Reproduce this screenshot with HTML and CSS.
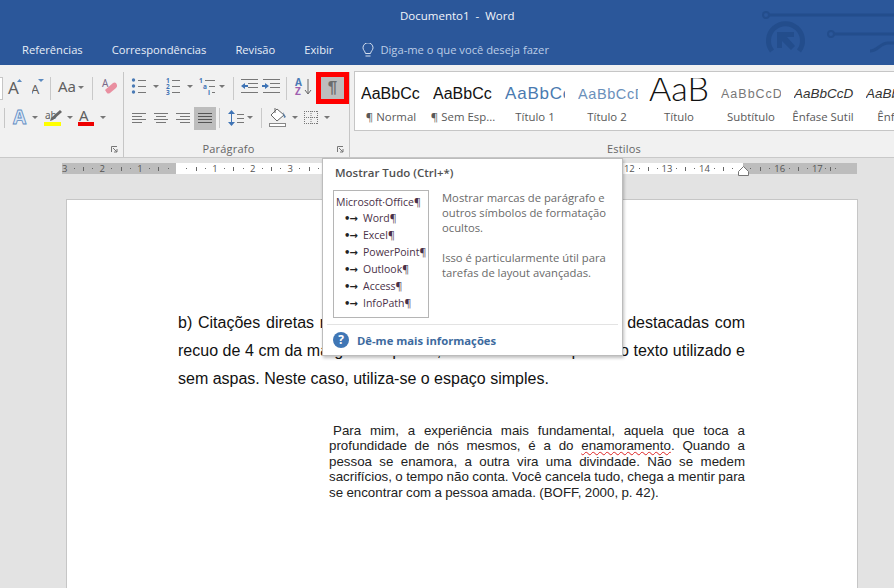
FILE: index.html
```html
<html>
<head>
	<title>Documento1 - Word</title>
	<meta charset="UTF-8">
	<link rel="stylesheet" href="styles.css">
</head>
<body>
	<header class="top">
		<!-- circuito decorativo da barra de titulo -->
		<svg class="circuit" width="134" height="65" viewBox="760 0 134 65" fill="none" stroke="#234d8c">
			<circle cx="766" cy="15" r="3" stroke-width="2"/>
			<path d="M769 15H894" stroke-width="3"/>
			<circle cx="831" cy="34" r="3" stroke-width="2"/>
			<path d="M834 34H894" stroke-width="3"/>
			<path d="M870 51c8 0 10-8 18-8h6" stroke-width="3"/>
			<path d="M772 51a17 17 0 1 1 27 0" stroke-width="5"/>
			<path d="M780 31h12v5h-7l8 9-4 4-9-9v7h-5V31z" fill="#234d8c" stroke="none" transform="translate(2 1)"/>
		</svg>
		<div class="title">Documento1&nbsp; - &nbsp;Word</div>
		<nav class="tabs">
			<span>Referências</span>
			<span>Correspondências</span>
			<span>Revisão</span>
			<span>Exibir</span>
			<span class="tell">
				<svg width="12" height="15" viewBox="0 0 12 15" fill="none" stroke="#d5e0f0">
					<path d="M3.5 10.5C3 8 1 7 1 4.8a5 5 0 0 1 10 0C11 7 9 8 8.500 10.500z"/>
					<path d="M3.500 13h5"/>
				</svg>
				Diga-me o que você deseja fazer
			</span>
		</nav>
	</header>

	<section class="ribbon">
		<div class="group group-font">
			<div class="row">
				<span class="sizebox"></span>
				<svg width="29" height="32" viewBox="3 72 29 32">
					<text x="8" y="94" class="gl" font-size="17">A</text>
					<path d="M17 82l2.500-3 2.500 3z" fill="#5b8ac0"/>
				</svg>
				<svg width="18" height="32" viewBox="32 72 18 32">
					<text x="31" y="94" class="gl" font-size="13">A</text>
					<path d="M38 79h6l-3 3z" fill="#5b8ac0"/>
				</svg>
				<i class="sep"></i>
				<svg width="41" height="32" viewBox="51 72 41 32">
					<text x="58" y="92" class="gl" font-size="15">Aa</text>
					<path d="M78 86h6l-3 3z" fill="#777"/>
				</svg>
				<i class="sep"></i>
				<svg width="30" height="32" viewBox="93 72 30 32">
					<text x="102" y="87" font-size="10" fill="#7a6a8a" font-family="Noto Sans">A</text>
					<path d="M105 90l8-7q1.500-1 3 0l1 2q.5 1.500-1 3l-6 5q-2 1-3 0z" fill="#e98fa0"/>
				</svg>
			</div>
			<div class="row">
				<svg width="8" height="28" viewBox="0 104 8 28"><path d="M4.500 108v20" stroke="#c6c6c6"/></svg>
				<svg width="31" height="28" viewBox="8 104 31 28">
					<text x="13" y="124" font-size="19" font-weight="bold" fill="#dbe7f6" stroke="#5f8cc2" stroke-width=".8" font-family="Noto Sans">A</text>
					<path d="M32 116h6l-3 3z" fill="#777"/>
				</svg>
				<svg width="34" height="28" viewBox="39 104 34 28">
					<text x="45" y="119" class="gl" font-size="10">ab</text>
					<path d="M62 112l-9 8-3 1 1-3 9-8z" fill="#666"/>
					<rect x="44" y="122" width="17" height="4" fill="#ff0"/>
					<path d="M67 116h6l-3 3z" fill="#777"/>
				</svg>
				<svg width="35" height="28" viewBox="74 104 35 28">
					<text x="80" y="121" class="gl" font-size="15">A</text>
					<rect x="79" y="122" width="16" height="4" fill="#e00"/>
					<path d="M101 116h6l-3 3z" fill="#777"/>
				</svg>
			</div>
			<div class="label-row">
				<svg class="launch" width="7" height="7" viewBox="0 0 7 7" fill="none" stroke="#777"><path d="M.5 6V.5H6M2 2l4 4M6 3v3H3"/></svg>
			</div>
		</div>

		<div class="group group-par">
			<div class="row">
				<svg width="37" height="32" viewBox="124 72 37 32">
					<g fill="#4a7ab5"><circle cx="133.500" cy="80" r="1.700"/><circle cx="133.500" cy="86" r="1.700"/><circle cx="133.500" cy="92" r="1.700"/></g>
					<path d="M138 80.500h8M138 86.500h8M138 92.500h8" stroke="#777"/>
					<path d="M153 85h6l-3 3z" fill="#777"/>
				</svg>
				<svg width="35" height="32" viewBox="161 72 35 32">
					<g class="num"><text x="166" y="83">1</text><text x="166" y="89">2</text><text x="166" y="95">3</text></g>
					<path d="M172 80.500h8M172 86.500h8M172 92.500h8" stroke="#777"/>
					<path d="M187 85h6l-3 3z" fill="#777"/>
				</svg>
				<svg width="37" height="32" viewBox="196 72 37 32">
					<g class="num"><text x="199" y="83">1</text><text x="203" y="89">a</text><text x="208" y="95">i</text></g>
					<path d="M205 80.500h10M209 86.500h6M212 92.500h3" stroke="#777"/>
					<path d="M219 85h6l-3 3z" fill="#777"/>
				</svg>
				<i class="sep"></i>
				<svg width="52" height="32" viewBox="234 72 52 32">
					<path d="M241 79.500h17M248 83.500h10M248 87.500h10M241 92.500h17M263 79.500h17M270 83.500h10M270 87.500h10M263 92.500h17" stroke="#777"/>
					<path d="M241 86l4-3v2h3v2h-3v2zM269 86l-4-3v2h-3v2h3v2z" fill="#3f74b5"/>
				</svg>
				<i class="sep"></i>
				<svg width="29" height="32" viewBox="287 72 29 32">
					<text x="295" y="86" font-size="10" font-weight="bold" fill="#4a7ab5" font-family="Noto Sans">A</text>
					<text x="295" y="95" font-size="10" font-weight="bold" fill="#a05fb0" font-family="Noto Sans">Z</text>
					<path d="M308 79v14M305 90l3 4 3-4" fill="none" stroke="#666"/>
				</svg>
				<span class="pilcrow">¶</span>
			</div>
			<div class="row">
				<svg width="70" height="28" viewBox="124 104 70 28">
					<path d="M132 113.500h14M132 116.500h10M132 119.500h14M132 122.500h10M154 113.500h14M156 116.500h10M154 119.500h14M156 122.500h10M176 113.500h14M180 116.500h10M176 119.500h14M180 122.500h10" stroke="#777"/>
				</svg>
				<span class="justify">
					<svg width="22" height="22" viewBox="0 0 22 22"><path d="M4 6.500h14M4 9.500h14M4 12.500h14M4 15.500h14" stroke="#555"/></svg>
				</span>
				<svg width="3" height="28" viewBox="0 0 3 28"></svg>
				<i class="sep low"></i>
				<svg width="41" height="28" viewBox="221 104 41 28">
					<path d="M232.500 112v12" stroke="#3f74b5"/>
					<path d="M229 114l3.500-4 3.500 4zM229 122l3.500 4 3.500-4z" fill="#3f74b5"/>
					<path d="M238 114.500h7M238 118.500h7M238 122.500h7" stroke="#777"/>
					<path d="M248 116h6l-3 3z" fill="#777"/>
				</svg>
				<i class="sep low"></i>
				<svg width="42" height="28" viewBox="263 104 42 28">
					<path d="M278 109l7 6-7 6-6-6z" fill="#fff" stroke="#666"/>
					<path d="M276 108v5" stroke="#666"/>
					<path d="M284 112l3 5-2 1z" fill="#5a7fa8"/>
					<rect x="270.500" y="123.500" width="16" height="3" fill="#fff" stroke="#888"/>
					<path d="M293 116h6l-3 3z" fill="#777"/>
				</svg>
				<svg width="44" height="28" viewBox="305 104 44 28">
					<path d="M305.500 111v13M312 111v13M318.500 111v13M305 111.500h14M305 117.500h14M305 123.500h14" stroke="#777" stroke-dasharray="1 1"/>
					<path d="M325 116h6l-3 3z" fill="#777"/>
				</svg>
			</div>
			<div class="label-row">
				<span class="label">Parágrafo</span>
				<svg class="launch" width="7" height="7" viewBox="0 0 7 7" fill="none" stroke="#777"><path d="M.5 6V.5H6M2 2l4 4M6 3v3H3"/></svg>
			</div>
		</div>

		<div class="group group-styles">
			<div class="gallery">
				<div class="style"><p class="pv">AaBbCc</p><span>¶ Normal</span></div>
				<div class="style"><p class="pv">AaBbCc</p><span>¶ Sem Esp...</span></div>
				<div class="style"><p class="pv t1">AaBbCc</p><span>Título 1</span></div>
				<div class="style"><p class="pv t2">AaBbCcD</p><span>Título 2</span></div>
				<div class="style"><p class="pv tt">AaB</p><span>Título</span></div>
				<div class="style"><p class="pv sub">AaBbCcD</p><span>Subtítulo</span></div>
				<div class="style"><p class="pv em">AaBbCcD</p><span>Ênfase Sutil</span></div>
				<div class="style"><p class="pv em">AaBbCcD</p><span>Ênfase</span></div>
			</div>
			<div class="label-row"><span class="label">Estilos</span></div>
		</div>
	</section>

	<main class="work">
		<div class="ruler">
			<span><b>3</b><i></i><u></u><i></i></span><span><b>2</b><i></i><u></u><i></i></span><span><b>1</b><i></i><u></u><i></i></span><span><b></b><i></i><u></u><i></i></span>
			<span><b>1</b><i></i><u></u><i></i></span><span><b>2</b><i></i><u></u><i></i></span><span><b>3</b><i></i><u></u><i></i></span><span><b>4</b><i></i><u></u><i></i></span>
			<span><b>5</b><i></i><u></u><i></i></span><span><b>6</b><i></i><u></u><i></i></span><span><b>7</b><i></i><u></u><i></i></span><span><b>8</b><i></i><u></u><i></i></span>
			<span><b>9</b><i></i><u></u><i></i></span><span><b>10</b><i></i><u></u><i></i></span><span><b>11</b><i></i><u></u><i></i></span><span><b>12</b><i></i><u></u><i></i></span>
			<span><b>13</b><i></i><u></u><i></i></span><span><b>14</b><i></i><u></u><i></i></span><span><b></b><i></i><u></u><i></i></span><span><b>16</b><i></i><u></u><i></i></span>
			<span><b>17</b><i></i><u></u><i></i></span>
			<svg class="indent" width="11" height="10" viewBox="0 0 11 10"><path d="M.5 9.500v-4l5-5 5 5v4z" fill="#fff" stroke="#777"/></svg>
		</div>
		<article class="page">
			<p class="body">b) Citações diretas no texto com mais de 3 linhas devem ser destacadas com recuo de 4 cm da margem esquerda, com letra menor que a do texto utilizado e sem aspas. Neste caso, utiliza-se o espaço simples.</p>
			<p class="quote">Para mim, a experiência mais fundamental, aquela que toca a profundidade de nós mesmos, é a do <span class="typo">enamoramento</span>. Quando a pessoa se enamora, a outra vira uma divindade. Não se medem sacrifícios, o tempo não conta. Você cancela tudo, chega a mentir para se encontrar com a pessoa amada. (BOFF, 2000, p. 42).</p>
		</article>
	</main>

	<aside class="tip">
		<h4>Mostrar Tudo (Ctrl+*)</h4>
		<div class="tip-main">
			<div class="sample">
				<div class="first">Microsoft·Office¶</div>
				<div class="li"><b>•→</b>Word¶</div>
				<div class="li"><b>•→</b>Excel¶</div>
				<div class="li"><b>•→</b>PowerPoint¶</div>
				<div class="li"><b>•→</b>Outlook¶</div>
				<div class="li"><b>•→</b>Access¶</div>
				<div class="li"><b>•→</b>InfoPath¶</div>
			</div>
			<div class="desc">
				<p>Mostrar marcas de parágrafo e outros símbolos de formatação ocultos.</p>
				<p>Isso é particularmente útil para tarefas de layout avançadas.</p>
			</div>
		</div>
		<div class="more">
			<span class="q">?</span>
			<span>Dê-me mais informações</span>
		</div>
	</aside>
</body>
</html>
```

FILE: styles.css
```css
* {
	margin: 0;
	padding: 0;
	box-sizing: border-box;
}
body {
	width: 894px;
	height: 588px;
	overflow: hidden;
	display: flex;
	flex-direction: column;
	position: relative;
	font-family: "Open Sans", "Noto Sans", sans-serif;
	background: #e3e3e3;
}

/* barra azul */
.top {
	height: 65px;
	background: #2b579a;
	color: #fff;
	position: relative;
	flex: none;
}
.circuit {
	position: absolute;
	top: 0;
	right: 0;
}
.title {
	position: relative;
	padding: 8px 0 0 400px;
	height: 36px;
	font-size: 11.5px;
	line-height: 16px;
	color: #f2f5fa;
}
.tabs {
	position: relative;
	display: flex;
	gap: 29px;
	padding-left: 22px;
	font-size: 11.2px;
	line-height: 28px;
	color: #e8eef7;
}
.tell {
	display: flex;
	align-items: center;
	gap: 6px;
	color: #bccde6;
}

/* faixa de opcoes */
.ribbon {
	height: 93px;
	flex: none;
	display: flex;
	background: #f1f1f1;
	border-bottom: 1px solid #c9c9c9;
	padding-top: 7px;
}
.group {
	display: flex;
	flex-direction: column;
}
.group-font {
	width: 124px;
	border-right: 1px solid #c6c6c6;
}
.group-par {
	width: 226px;
	border-right: 1px solid #c6c6c6;
}
.group-styles {
	flex: 1;
	min-width: 0;
	padding-left: 4px;
}
.row {
	display: flex;
	align-items: center;
	height: 32px;
}
.row + .row {
	height: 28px;
}
.row svg {
	flex: none;
}
.gl {
	fill: #5f5f5f;
	font-family: "Noto Sans", sans-serif;
}
.num {
	fill: #3f74b5;
	font-family: "Noto Sans", sans-serif;
	font-size: 6.5px;
	font-weight: bold;
}
.sizebox {
	width: 3px;
	height: 23px;
	background: #fff;
	border: 1px solid #c6c6c6;
	border-left: 0;
}
.sep {
	flex: none;
	width: 1px;
	height: 23px;
	background: #c9c9c9;
}
.sep.low {
	height: 20px;
}
.pilcrow {
	width: 33px;
	height: 32px;
	border: 5px solid #f00;
	background: #bdbdbd;
	display: flex;
	align-items: center;
	justify-content: center;
	font-family: "Liberation Sans", sans-serif;
	font-size: 17px;
	font-weight: bold;
	color: #6c6c6c;
}
.justify {
	width: 22px;
	height: 23px;
	background: #bdbdbd;
	display: flex;
	align-items: center;
}
.label-row {
	display: flex;
	align-items: center;
	justify-content: center;
	height: 25px;
	padding-top: 8px;
	position: relative;
}
.label {
	font-size: 11px;
	letter-spacing: .2px;
	color: #666;
}
.group-par .label {
	margin-right: 16px;
}
.launch {
	position: absolute;
	right: 5px;
	top: 14px;
}

/* galeria de estilos */
.gallery {
	height: 60px;
	display: flex;
	background: #fff;
	border: 1px solid #c6c6c6;
	border-right: 0;
	overflow: hidden;
	margin-top: -1px;
	margin-bottom: 1px;
}
.style {
	flex: none;
	width: 72px;
	overflow: hidden;
	text-align: center;
	color: #595959;
	font-size: 11.4px;
	white-space: nowrap;
}
.style span {
	display: block;
	line-height: 16px;
}
.pv {
	height: 37px;
	line-height: 44px;
	margin-left: 6px;
	width: 60px;
	text-align: left;
	overflow: hidden;
	color: #111;
	font-family: "Liberation Sans", sans-serif;
	font-size: 16px;
}
.t1 {
	font-size: 17px;
	color: #4a7ab0;
	letter-spacing: .8px;
}
.t2 {
	font-size: 14.5px;
	color: #6a90bb;
	letter-spacing: .6px;
	margin-left: 7px;
}
.tt {
	font-family: "Lato", sans-serif;
	font-weight: 300;
	font-size: 34px;
	line-height: 20px;
	text-align: center;
	margin: 6px 0 0;
	width: auto;
	height: 31px;
}
.sub {
	font-size: 12.5px;
	letter-spacing: 1px;
	color: #777;
}
.em {
	font-size: 13.5px;
	font-style: italic;
	color: #333;
	margin-left: 7px;
}

/* area do documento */
.work {
	flex: 1;
	min-height: 0;
	padding: 5px 37px 0 66px;
	background: #e3e3e3;
}
.ruler {
	position: relative;
	height: 11px;
	margin: 0 0 25px -4px;
	width: 795px;
	display: flex;
	font-size: 9.5px;
	line-height: 11px;
	color: #555;
	background: linear-gradient(90deg, #bdbdbd 114px, #fff 114px, #fff 681px, #bdbdbd 681px);
}
.ruler span {
	flex: none;
	width: 37.6px;
	display: grid;
	grid-template-columns: repeat(4, 1fr);
	align-items: center;
	justify-items: center;
}
.ruler span:first-child {
	margin-left: -2px;
}
.ruler span:last-of-type {
	width: 26px;
}
.ruler b {
	font-weight: normal;
	white-space: nowrap;
}
.ruler i {
	width: 1px;
	height: 1px;
	background: #666;
}
.ruler u {
	width: 1px;
	height: 4px;
	background: #666;
}
.indent {
	position: absolute;
	left: 676px;
	top: 3px;
}
.page {
	width: 792px;
	height: 389px;
	background: #fff;
	border: 1px solid #c6c6c6;
	border-bottom: 0;
	padding: 109px 112px 0 111px;
	font-family: "Liberation Sans", sans-serif;
	color: #111;
}
.body {
	font-size: 16px;
	line-height: 28px;
	text-align: justify;
}
.quote {
	margin: 30px 0 0 151px;
	font-size: 13.33px;
	line-height: 15.4px;
	text-align: justify;
	text-indent: 4px;
	word-spacing: -.4px;
	color: #222;
}
.typo {
	text-decoration: underline wavy #d22;
	text-decoration-thickness: 1px;
}

/* dica flutuante */
.tip {
	position: absolute;
	left: 322px;
	top: 158px;
	width: 301px;
	height: 198px;
	background: #fff;
	border: 1px solid #bcbcbc;
	box-shadow: 1px 2px 3px rgba(0, 0, 0, .25);
	color: #646464;
	font-size: 11px;
}
.tip h4 {
	padding: 6px 0 0 12px;
	font-size: 11.5px;
	line-height: 16px;
	font-weight: 600;
	color: #505050;
}
.tip-main {
	display: flex;
	gap: 13px;
	padding: 9px 0 0 10px;
}
.sample {
	flex: none;
	width: 96px;
	height: 128px;
	border: 1px solid #b5b5b5;
	padding: 3px 0 0 2px;
	font-size: 10.5px;
	line-height: 17px;
	color: #4a3148;
	white-space: nowrap;
}
.sample .first {
	height: 16px;
}
.sample .li {
	padding-left: 8px;
}
.sample b {
	display: inline-block;
	width: 19px;
	font-family: "DejaVu Sans", sans-serif;
	font-size: 10px;
	letter-spacing: -1px;
	color: #222;
}
.desc {
	line-height: 15px;
	font-size: 11.25px;
	color: #6a6a6a;
}
.desc p {
	margin-bottom: 15px;
}
.more {
	margin: 6px 4px 0;
	padding: 7px 0 0 6px;
	border-top: 1px solid #e3e3e3;
	display: flex;
	align-items: center;
	gap: 8px;
	font-size: 11.25px;
	font-weight: 700;
	color: #3d6a9e;
}
.q {
	width: 16px;
	height: 16px;
	border-radius: 50%;
	background: #3f76b5;
	color: #fff;
	font-size: 12px;
	line-height: 16px;
	text-align: center;
}
```
